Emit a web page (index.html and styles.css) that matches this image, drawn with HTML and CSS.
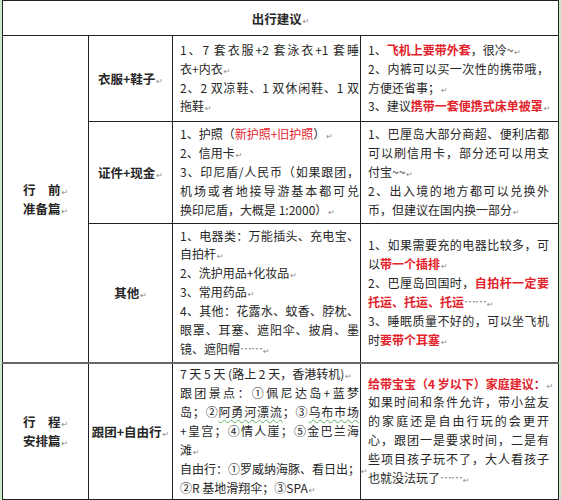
FILE: index.html
```html
<!DOCTYPE html>
<html lang="zh-CN">
<head>
<meta charset="utf-8">
<title>出行建议</title>
<link rel="stylesheet" href="styles.css">
</head>
<body>
<table class="plan">
  <colgroup>
    <col class="c1"><col class="c2"><col class="c3"><col class="c4">
  </colgroup>
  <tr class="r0">
    <th colspan="4" class="title">出行建议<span class="pm">↵</span></th>
  </tr>
  <tr class="r1">
    <td rowspan="3" class="sec"><div>行　前<span class="pm">↵</span></div><div>准备篇<span class="pm">↵</span></div></td>
    <td class="cat">衣服+鞋子<span class="pm">↵</span></td>
    <td class="txt items">
      <div class="l j">1、7 套衣服+2 套泳衣+1 套睡</div>
      <div class="l">衣+内衣<span class="pm">↵</span></div>
      <div class="l j">2、2 双凉鞋、1 双休闲鞋、1 双</div>
      <div class="l">拖鞋<span class="pm">↵</span></div>
    </td>
    <td class="txt tips">
      <div class="l">1、<b class="red">飞机上要带外套</b>，很冷~<span class="pm">↵</span></div>
      <div class="l j">2、内裤可以买一次性的携带哦，</div>
      <div class="l">方便还省事；<span class="pm">↵</span></div>
      <div class="l">3、建议<b class="red">携带一套便携式床单被罩</b><span class="pm">↵</span></div>
    </td>
  </tr>
  <tr class="r2">
    <td class="cat">证件+现金<span class="pm">↵</span></td>
    <td class="txt items">
      <div class="l">1、护照（<span class="red">新护照+旧护照</span>）<span class="pm">↵</span></div>
      <div class="l">2、信用卡<span class="pm">↵</span></div>
      <div class="l j">3、印尼盾/人民币（如果跟团，</div>
      <div class="l j">机场或者地接导游基本都可兑</div>
      <div class="l">换印尼盾，大概是 1:2000）<span class="pm">↵</span></div>
    </td>
    <td class="txt tips">
      <div class="l j">1、巴厘岛大部分商超、便利店都</div>
      <div class="l j">可以刷信用卡，部分还可以用支</div>
      <div class="l">付宝~~<span class="pm">↵</span></div>
      <div class="l j">2、出入境的地方都可以兑换外</div>
      <div class="l">币，但建议在国内换一部分<span class="pm">↵</span></div>
    </td>
  </tr>
  <tr class="r3">
    <td class="cat">其他<span class="pm">↵</span></td>
    <td class="txt items">
      <div class="l j">1、电器类：万能插头、充电宝、</div>
      <div class="l">自拍杆<span class="pm">↵</span></div>
      <div class="l">2、洗护用品+化妆品<span class="pm">↵</span></div>
      <div class="l">3、常用药品<span class="pm">↵</span></div>
      <div class="l j">4、其他：花露水、蚊香、脖枕、</div>
      <div class="l j">眼罩、耳塞、遮阳伞、披肩、墨</div>
      <div class="l">镜、遮阳帽<span class="dots">……</span><span class="pm">↵</span></div>
    </td>
    <td class="txt tips">
      <div class="l j">1、如果需要充的电器比较多，可</div>
      <div class="l">以<b class="red">带一个插排</b><span class="pm">↵</span></div>
      <div class="l j">2、巴厘岛回国时，<b class="red">自拍杆一定要</b></div>
      <div class="l"><b class="red">托运、托运、托运</b><span class="dots">……</span><span class="pm">↵</span></div>
      <div class="l j">3、睡眠质量不好的，可以坐飞机</div>
      <div class="l">时<b class="red">要带个耳塞</b><span class="pm">↵</span></div>
    </td>
  </tr>
  <tr class="r4">
    <td class="sec"><div>行　程<span class="pm">↵</span></div><div>安排篇<span class="pm">↵</span></div></td>
    <td class="cat">跟团+自由行<span class="pm">↵</span></td>
    <td class="txt items">
      <div class="l">7 天 5 天 (路上 2 天，香港转机)<span class="pm">↵</span></div>
      <div class="l j">跟团景点：①佩尼达岛+蓝梦</div>
      <div class="l j">岛；②<span class="wavy">阿勇河漂流</span>；③<span class="wavy">乌布市场</span></div>
      <div class="l j">+皇宫；④情人崖；⑤金巴兰海</div>
      <div class="l">滩<span class="pm">↵</span></div>
      <div class="l">自由行：①罗威纳海豚、看日出；<span class="pm">↵</span></div>
      <div class="l">②R 基地滑翔伞；③SPA<span class="pm">↵</span></div>
    </td>
    <td class="txt tips">
      <div class="l"><b class="red">给带宝宝（4 岁以下）家庭建议：</b><span class="pm">↵</span></div>
      <div class="l j">如果时间和条件允许，带小盆友</div>
      <div class="l j">的家庭还是自由行玩的会更开</div>
      <div class="l j">心，跟团一是要求时间，二是有</div>
      <div class="l j">些项目孩子玩不了，大人看孩子</div>
      <div class="l">也就没法玩了<span class="dots">……</span><span class="pm">↵</span></div>
    </td>
  </tr>
</table>
</body>
</html>
```
FILE: styles.css
```css
html {
  background: #c9e7c9;
}
body {
  margin: 0;
  font-family: "Noto Sans CJK SC", "Noto Sans", sans-serif;
  font-size: 12px;
  color: #262626;
}
.plan {
  margin: 0 0 0 2px;
  width: 556px;
  table-layout: fixed;
  border-collapse: collapse;
  background: #fff;
  border: 1px solid #222;
}
.c1 { width: 86px; }
.c2 { width: 84px; }
.c3 { width: 188px; }
.c4 { width: 198px; }

.r0 { height: 35px; }
.r1 { height: 86px; }
.r2 { height: 102px; }
.r3 { height: 139px; }
.r4 { height: 137px; }

.plan th,
.plan td {
  border: 1px solid #222;
  padding: 0;
  vertical-align: middle;
  line-height: 19px;
}
.r4 td {
  border-top: 2px solid #666;
}
.title {
  font-weight: bold;
  text-align: center;
  font-size: 12.5px;
}
.sec {
  text-align: center;
  font-weight: bold;
  font-size: 12.5px;
  padding-left: 4px;
}
.cat {
  text-align: center;
  font-weight: bold;
  font-size: 12.5px;
  padding: 0 0 0 8px;
  white-space: nowrap;
}
.plan td.items {
  padding: 0 6px 0 7px;
}
.plan td.tips {
  padding: 0 9px 0 7px;
}
.l {
  text-align: left;
  white-space: nowrap;
  line-height: 18.9px;
}
.l.j {
  white-space: normal;
  text-align: justify;
  text-align-last: justify;
}
.items .l.j {
  margin-right: -5px;
}
.red {
  color: #e3232b;
}
b.red {
  font-weight: bold;
}
.pm {
  font-family: "DejaVu Sans", sans-serif;
  font-size: 8px;
  line-height: 0;
  font-weight: normal;
  color: #8a8a8a;
  margin-left: 1px;
}
.dots {
  color: #777;
  letter-spacing: -1px;
}
.wavy {
  text-decoration: underline wavy #5fae5f;
  text-decoration-thickness: 1px;
  text-underline-offset: 2px;
}
```
